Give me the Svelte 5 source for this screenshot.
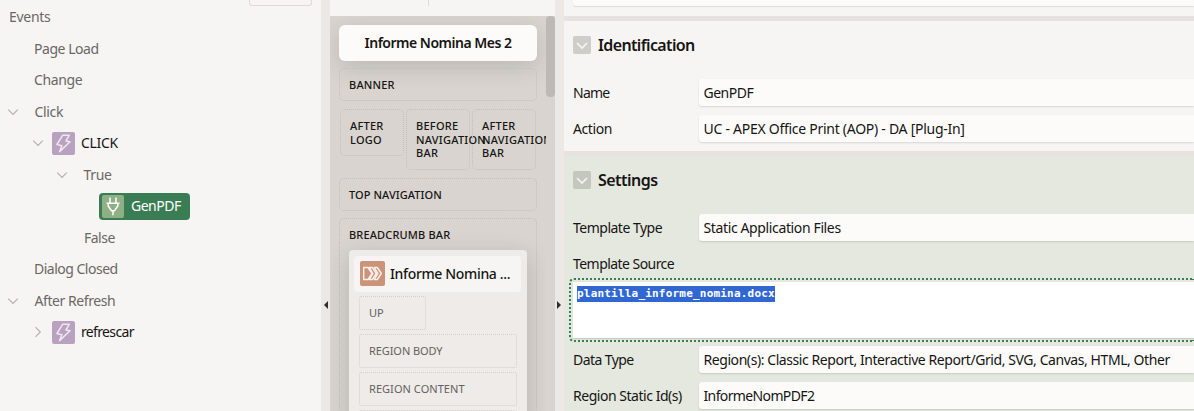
<script>
  const tree = [
    { label: 'Events', pad: 9, ls: -0.3 },
    { label: 'Page Load', pad: 34, ls: -0.46 },
    { label: 'Change', pad: 34, ls: -0.35 },
    { label: 'Click', pad: 7, toggle: 'down', ls: -0.35 },
    { label: 'CLICK', pad: 32, toggle: 'down', icon: 'bolt', ls: -0.35 },
    { label: 'True', pad: 56, toggle: 'down', ls: -0.35 },
    { label: 'GenPDF', pad: 99, icon: 'plug', selected: true, ls: -0.5 },
    { label: 'False', pad: 84, ls: -0.5 },
    { label: 'Dialog Closed', pad: 34, ls: -0.5 },
    { label: 'After Refresh', pad: 7, toggle: 'down', ls: -0.43 },
    { label: 'refrescar', pad: 32, toggle: 'right', icon: 'bolt', ls: -0.65 }
  ];
  const identification = [
    { label: 'Name', value: 'GenPDF', ll: -0.75, vl: -0.5 },
    { label: 'Action', value: 'UC - APEX Office Print (AOP) - DA [Plug-In]', ll: -0.4, vl: -0.27 }
  ];
  const output = [
    { label: 'Data Type', value: 'Region(s): Classic Report, Interactive Report/Grid, SVG, Canvas, HTML, Other', ll: -0.57, vl: -0.43 },
    { label: 'Region Static Id(s)', value: 'InformeNomPDF2', ll: -0.47, vl: -0.63 }
  ];
</script>

{#snippet chevron(dir)}
  <svg class="chev" viewBox="0 0 12 12" width="12" height="12" fill="none" stroke="currentColor" stroke-width="1.1">
    <path d={dir === 'right' ? 'M3.5 1.2 8.3 6 3.5 10.8' : 'M1.2 3.7 6 8.5 10.8 3.7'} />
  </svg>
{/snippet}

{#snippet field(row)}
  <div class="field">
    <span class="label" style="letter-spacing:{row.ll}px">{row.label}</span>
    <div class="input"><span style="letter-spacing:{row.vl}px">{row.value}</span></div>
  </div>
{/snippet}

{#snippet heading(text, ls)}
  <h2 style="letter-spacing:{ls}px">
    <span class="fold">
      <svg viewBox="0 0 18 18" width="18" height="18" fill="none" stroke="#f6f5f3" stroke-width="1.7"><path d="M4 7 9 12 14 7" /></svg>
    </span>
    {text}
  </h2>
{/snippet}

<main>
  <aside class="events">
    <div class="stub"></div>
    <ul>
      {#each tree as n}
        <li style="padding-left:{n.pad}px" class:strong={n.icon}>
          {#if n.toggle}{@render chevron(n.toggle)}{/if}
          <span class="node" class:selected={n.selected} class:plain={!n.icon && n.toggle}>
            {#if n.icon === 'bolt'}
              <svg class="ico bolt" viewBox="0 0 23 23" width="23" height="23">
                <path d="M10.800 3.200H17.300L14 8.900 18 9.800 7.600 19.600 9.900 13.700 4.900 12.500z" fill="none" stroke="#eee7f0" stroke-width="1.500" stroke-linejoin="round" />
              </svg>
            {:else if n.icon === 'plug'}
              <svg class="ico plug" viewBox="0 0 22 23" width="22" height="23" fill="none" stroke="#fff" stroke-width="1.5">
                <path d="M8 2.5V8M14 2.5V8M4.5 8.2h13M6.2 8.2V11L9.5 15.7h3L15.800 11V8.200M11 15.700V20.300" />
              </svg>
            {/if}
            <span style="letter-spacing:{n.ls}px">{n.label}</span>
          </span>
        </li>
      {/each}
    </ul>
  </aside>

  <div class="split left"><i></i></div>

  <section class="layout">
    <div class="ruler"><i></i></div>
    <div class="canvas">
      <div class="scroll">
        <div class="page">Informe Nomina Mes 2</div>
        <div class="slot banner">BANNER</div>
        <div class="trio">
          <div class="slot">AFTER<br />LOGO</div>
          <div class="slot tall">BEFORE<br />NAVIGATION<br />BAR</div>
          <div class="slot tall">AFTER<br />NAVIGATION<br />BAR</div>
        </div>
        <div class="slot topnav">TOP NAVIGATION</div>
        <div class="slot crumb">
          <span>BREADCRUMB BAR</span>
          <div class="region">
            <div class="region-head">
              <svg viewBox="0 0 25 25" width="25" height="25">
                <rect width="25" height="25" rx="2" fill="#cb947a" />
                <path d="M3.700 6.500H8L12 12.500 8 18.500H3.700zM9.300 6.500H12.300L16.300 12.500 12.300 18.500H9.300L13 12.500zM14.300 6.500H17.300L21.300 12.500 17.300 18.500H14.300L18 12.500z" fill="none" stroke="#fbf1ec" stroke-width="1.400" stroke-linejoin="round" />
              </svg>
              <span>Informe Nomina ...</span>
            </div>
            <div class="sub up">UP</div>
            <div class="sub">REGION BODY</div>
            <div class="sub wide">REGION CONTENT</div>
            <div class="sub"></div>
          </div>
        </div>
      </div>
      <div class="track"><i></i></div>
    </div>
  </section>

  <div class="split right"><i></i></div>

  <section class="props">
    <div class="search"><div></div></div>
    <div class="group">
      {@render heading('Identification', -0.63)}
      {#each identification as row}{@render field(row)}{/each}
    </div>
    <div class="group settings">
      {@render heading('Settings', -0.52)}
      {@render field({ label: 'Template Type', value: 'Static Application Files', ll: -0.5, vl: -0.37 })}
      <div class="label source">Template Source</div>
      <div class="area"><div><mark>plantilla_informe_nomina.docx</mark></div></div>
      {#each output as row}{@render field(row)}{/each}
    </div>
  </section>
</main>

<style>
  main {
    display: flex;
    width: 1194px;
    height: 411px;
    overflow: hidden;
    background: #f6f5f3;
    color: #161513;
    font: 14px/20px "Noto Sans", "Open Sans", sans-serif;
    white-space: nowrap;
  }
  main * { box-sizing: border-box; }
  svg { flex: none; display: block; }

  .events { width: 321px; flex: none; display: flex; flex-direction: column; }
  .stub { align-self: flex-end; width: 63px; height: 6px; flex: none; margin-right: 9px; border: 1px solid #dedad7; border-top: 0; border-radius: 0 0 3px 3px; }
  ul { list-style: none; margin: -4.700px 0 0; padding: 0; }
  li { display: flex; align-items: center; height: 31.5px; color: #6b6764; }
  li.strong { color: #161513; }
  .chev { color: #b3afac; }
  .node { display: flex; align-items: center; gap: 6px; }
  .node.plain { margin-left: 15.500px; }
  .ico { border-radius: 2px; }
  .bolt { background: #b9a2bf; margin-left: 8px; }
  .plug { background: #8fb085; }
  .node.selected { width: 91px; height: 27px; padding-left: 3px; gap: 7px; background: #3a7d54; border-radius: 4px; color: #fff; }

  .split { width: 9px; flex: none; background: #ece8e5; display: flex; align-items: center; padding-top: 198px; }
  .split i { width: 0; height: 0; border: 4px solid transparent; }
  .left i { border-right: 4px solid #302d2a; border-left: 0; margin-left: 3px; }
  .right i { border-left: 4px solid #302d2a; border-right: 0; margin-left: 2px; }

  .layout { width: 225px; flex: none; display: flex; flex-direction: column; }
  .ruler { height: 16px; flex: none; padding-left: 98px; }
  .ruler i { display: block; width: 1px; height: 6px; background: #dedad7; }
  .canvas { flex: 1; min-height: 0; display: flex; background: #d9d4cf; overflow: hidden; }
  .scroll { width: 216px; flex: none; overflow: hidden; padding: 9px 9px 0; }
  .track { width: 9px; }
  .track i { display: block; height: 81px; border-radius: 4px; background: #bfb9b6; }
  .page { height: 36px; background: #fcfbfa; border-radius: 6px; box-shadow: 0 6px 24px rgba(0,0,0,.14); font-weight: 600; line-height: 36px; text-align: center; letter-spacing: -.5px; }
  .slot { border: 1px dotted #c3beb9; border-radius: 5px; font-size: 11px; font-weight: 500; line-height: 13.500px; letter-spacing: .08px; padding: 9px; }
  .banner { height: 33px; margin-top: 7px; letter-spacing: .2px; }
  .trio { display: grid; grid-template-columns: 64px 64px 64px; gap: 2px; padding: 8px 1px; align-items: start; }
  .trio .slot { height: 47px; letter-spacing: .25px; }
  .trio .tall { height: 61px; }
  .topnav { height: 33px; }
  .crumb { height: 300px; margin-top: 7px; letter-spacing: .16px; }
  .region { width: 178px; height: 280px; margin-top: 8px; padding: 6px 5px; background: #eeebe8; border-radius: 4px; box-shadow: 0 6px 24px rgba(0,0,0,.16); }
  .region-head { width: 167px; height: 36px; display: flex; align-items: center; gap: 5px; padding-left: 6px; background: #f6f5f3; border-radius: 4px; font-size: 14px; letter-spacing: -.35px; }
  .sub { width: 158px; height: 34px; margin: 4px 0 0 5px; padding: 0 9px; border: 1px dotted #d3cfcb; border-radius: 2px; font-weight: 400; line-height: 31px; letter-spacing: -.08px; color: #65615e; }
  .sub.wide { letter-spacing: .05px; }
  .sub.up { width: 67px; }

  .props { flex: 1; min-width: 0; display: flex; flex-direction: column; }
  .search { height: 16px; flex: none; padding-left: 9px; }
  .search div { height: 6px; background: #fcfbfa; border-radius: 0 0 0 3px; box-shadow: 0 1px 1px #e0dddb; }
  .group { border-top: 5px solid #e6e2df; height: 135px; flex: none; padding: 15px 0 0 9px; }
  .settings { background: #e4e8df; height: 270px; }
  h2 { display: flex; align-items: center; gap: 7px; height: 18px; margin: 0 0 25px; font-size: 16px; font-weight: 600; }
  .fold { background: #cfcdc7; border-radius: 2px; }
  .settings .fold { background: #c5c6bf; }
  .field { display: flex; align-items: center; height: 27px; margin-bottom: 9px; }
  .label { width: 126px; flex: none; }
  .input { flex: 1; height: 27px; padding-left: 4.500px; line-height: 27px; background: #fcfbfa; border-radius: 3px 0 0 3px; box-shadow: 0 1px 2px rgba(0,0,0,.13); }
  .source { height: 27px; line-height: 27px; letter-spacing: -.55px; }
  .area { height: 64px; margin: 1px 0 4.400px -4px; border: 2px dotted #3a7d54; border-right: 0; border-radius: 5px 0 0 5px; padding: 2px 0 2px 2px; }
  .area div { height: 56px; padding: 4px; background: #fff; box-shadow: 0 1px 1px #c8ccc3; line-height: 0; }
  mark { display: inline-block; width: 198px; height: 16px; background: #3167d3; color: #fff; font: bold 11px/15px "DejaVu Sans Mono", monospace; letter-spacing: .2px; }
</style>
